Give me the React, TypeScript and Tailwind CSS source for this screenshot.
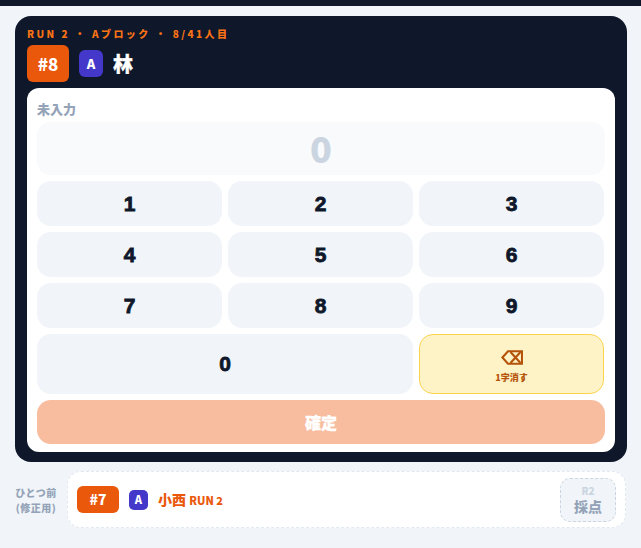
export default function App() {
  const jp = "font-['Noto_Sans_CJK_JP','Noto_Sans',sans-serif]";
  const key = "flex items-center justify-center rounded-[14px] bg-[#f1f5f9] text-[#0f172a] text-[21px] font-black font-['Liberation_Sans',sans-serif] [-webkit-text-stroke:0.8px_#0f172a]";
  const digits = ["1", "2", "3", "4", "5", "6", "7", "8", "9"];
  return (
    <div className={`min-h-[548px] bg-[#f1f5f9] ${jp}`}>
      <div className="h-[6px] bg-[#0f172a]" />
      <div className="ml-[15px] mr-[14px] mt-[10px] h-[446px] rounded-[16px] bg-[#0f172a] px-[12px] pt-[10px]">
        <div className="h-[16px] text-[10px] font-black leading-[16px] tracking-[2.45px] text-[#f97316]">RUN 2 ・ Aブロック ・ 8/41人目</div>
        <div className="mt-[3px] flex h-[37px] items-center">
          <div className="flex h-[37px] w-[42px] items-center justify-center rounded-[6px] bg-[#ea580c] text-[17px] font-black text-white">#8</div>
          <div className="ml-[10px] flex h-[27px] w-[24px] items-center justify-center rounded-[6px] bg-[#4338ca] text-[13px] font-black text-white">A</div>
          <div className="ml-[10px] text-[20px] font-black text-white [-webkit-text-stroke:0.3px_#ffffff]">林</div>
        </div>
        <div className="mt-[6px] flex h-[364px] flex-col rounded-[12px] bg-white px-[10px] pt-[12px]">
          <div className="h-[22px] text-[13px] font-black leading-[17px] text-[#94a3b8]">未入力</div>
          <div className="flex h-[53px] items-center justify-center rounded-[14px] bg-[#f8fafc] pb-[3px] text-[36px] font-black leading-none text-[#cbd5e1]">0</div>
          <div className="mt-[6px] grid w-[567px] grid-cols-3 grid-rows-[45px_45px_45px_60px] gap-[6px]">
            {digits.map((d) => (
              <button key={d} className={key}>{d}</button>
            ))}
            <button className={`${key} col-span-2`}>0</button>
            <button className="flex flex-col items-center justify-center rounded-[14px] border border-[#fcd34d] bg-[#fef3c7] pt-[6px] text-[#b45309]">
              <svg width="22" height="15" viewBox="0 0 22 15" fill="none" stroke="currentColor" strokeWidth="2.1" strokeLinejoin="miter">
                <path d="M1.4 7.5 L7 1.2 H21 V13.8 H7 Z" />
                <path d="M9.5 2 L19.5 13 M19.5 2 L9.5 13" />
              </svg>
              <span className="mt-[7px] text-[9px] font-black leading-[12px]">1字消す</span>
            </button>
          </div>
          <button className="mt-[6px] flex h-[44px] w-[568px] items-center justify-center rounded-[14px] bg-[#f8bc9e] text-[16px] font-black text-white [-webkit-text-stroke:0.3px_#ffffff]">確定</button>
        </div>
      </div>
      <div className="ml-[15px] mr-[15px] mt-[9px] flex h-[57px] items-center gap-[10px]">
        <div className="w-[42px] text-center text-[10px] font-black leading-[15px] tracking-[0.5px] text-[#94a3b8]">ひとつ前<br />(修正用)</div>
        <div className="flex h-[57px] flex-1 items-center rounded-[14px] border border-dashed border-[#e2e8f0] bg-white pl-[9px] pr-[9px]">
          <div className="flex h-[27px] w-[42px] items-center justify-center rounded-[6px] bg-[#ea580c] text-[14px] font-black text-white">#7</div>
          <div className="ml-[10px] flex h-[20px] w-[19px] items-center justify-center rounded-[5px] bg-[#4338ca] text-[11px] font-black text-white">A</div>
          <div className="ml-[10px] text-[14px] font-black text-[#ea580c]">小西 <span className="text-[11px] font-black">RUN 2</span></div>
          <div className="ml-auto flex h-[44px] w-[56px] flex-col items-center justify-center gap-[2px] rounded-[10px] border border-dashed border-[#cbd5e1] bg-[#f1f5f9]">
            <span className="text-[10px] font-black leading-[11px] text-[#cbd5e1]">R2</span>
            <span className="text-[14px] font-black leading-[17px] text-[#94a3b8]">採点</span>
          </div>
        </div>
      </div>
    </div>
  );
}
